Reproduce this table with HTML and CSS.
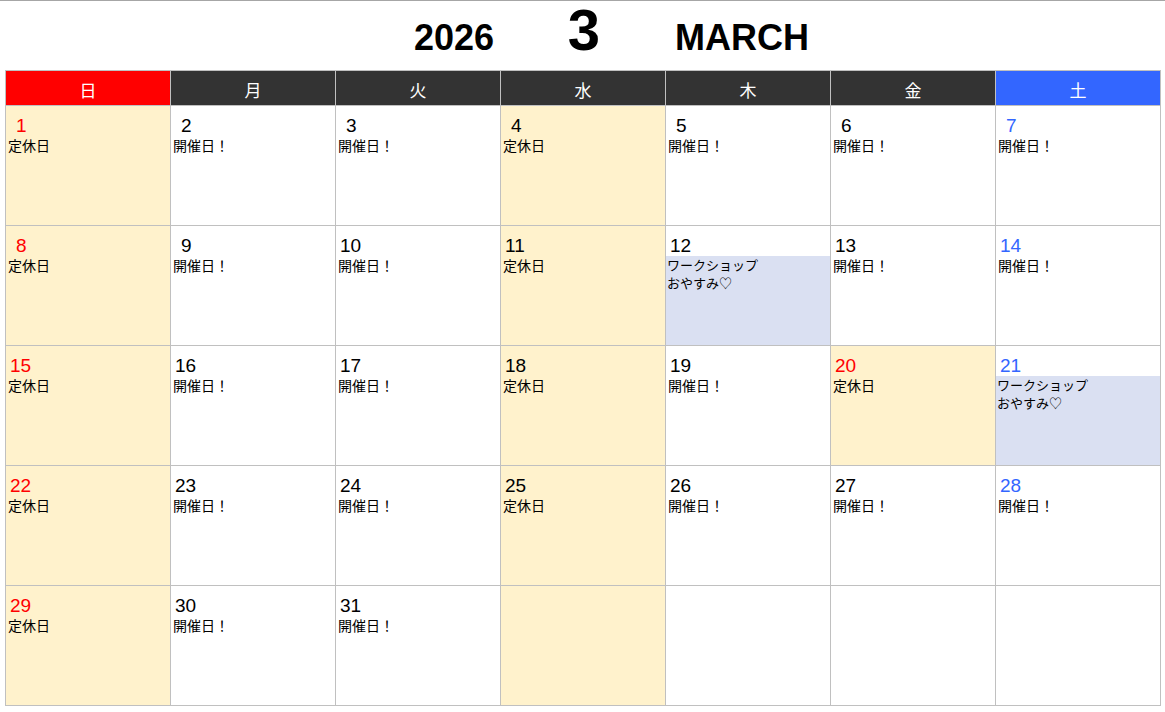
FILE: index.html
```html
<!DOCTYPE html>
<html lang="ja">
<head>
<meta charset="utf-8">
<title>2026 3 MARCH</title>
<link rel="stylesheet" href="styles.css">
</head>
<body>
<div class="page">
  <div class="title">
    <span class="t-year">2026</span>
    <span class="t-month">3</span>
    <span class="t-name">MARCH</span>
  </div>
  <div class="cal">
    <div class="dow sun">日</div>
    <div class="dow">月</div>
    <div class="dow">火</div>
    <div class="dow">水</div>
    <div class="dow">木</div>
    <div class="dow">金</div>
    <div class="dow sat">土</div>

    <div class="cell off"><div class="num red one">1</div><div class="label">定休日</div></div>
    <div class="cell"><div class="num one">2</div><div class="label">開催日！</div></div>
    <div class="cell"><div class="num one">3</div><div class="label">開催日！</div></div>
    <div class="cell off"><div class="num one">4</div><div class="label">定休日</div></div>
    <div class="cell"><div class="num one">5</div><div class="label">開催日！</div></div>
    <div class="cell"><div class="num one">6</div><div class="label">開催日！</div></div>
    <div class="cell"><div class="num blue one">7</div><div class="label">開催日！</div></div>

    <div class="cell off"><div class="num red one">8</div><div class="label">定休日</div></div>
    <div class="cell"><div class="num one">9</div><div class="label">開催日！</div></div>
    <div class="cell"><div class="num">10</div><div class="label">開催日！</div></div>
    <div class="cell off"><div class="num">11</div><div class="label">定休日</div></div>
    <div class="cell"><div class="num">12</div><div class="event">ワークショップ<br>おやすみ♡</div></div>
    <div class="cell"><div class="num">13</div><div class="label">開催日！</div></div>
    <div class="cell"><div class="num blue">14</div><div class="label">開催日！</div></div>

    <div class="cell off"><div class="num red">15</div><div class="label">定休日</div></div>
    <div class="cell"><div class="num">16</div><div class="label">開催日！</div></div>
    <div class="cell"><div class="num">17</div><div class="label">開催日！</div></div>
    <div class="cell off"><div class="num">18</div><div class="label">定休日</div></div>
    <div class="cell"><div class="num">19</div><div class="label">開催日！</div></div>
    <div class="cell off"><div class="num red">20</div><div class="label">定休日</div></div>
    <div class="cell"><div class="num blue">21</div><div class="event">ワークショップ<br>おやすみ♡</div></div>

    <div class="cell off"><div class="num red">22</div><div class="label">定休日</div></div>
    <div class="cell"><div class="num">23</div><div class="label">開催日！</div></div>
    <div class="cell"><div class="num">24</div><div class="label">開催日！</div></div>
    <div class="cell off"><div class="num">25</div><div class="label">定休日</div></div>
    <div class="cell"><div class="num">26</div><div class="label">開催日！</div></div>
    <div class="cell"><div class="num">27</div><div class="label">開催日！</div></div>
    <div class="cell"><div class="num blue">28</div><div class="label">開催日！</div></div>

    <div class="cell off"><div class="num red">29</div><div class="label">定休日</div></div>
    <div class="cell"><div class="num">30</div><div class="label">開催日！</div></div>
    <div class="cell"><div class="num">31</div><div class="label">開催日！</div></div>
    <div class="cell off"></div>
    <div class="cell"></div>
    <div class="cell"></div>
    <div class="cell"></div>
  </div>
</div>
</body>
</html>
```

FILE: styles.css
```css
html, body {
  margin: 0;
  padding: 0;
  background: #ffffff;
}

body {
  font-family: "Liberation Sans", "Noto Sans CJK JP", sans-serif;
  color: #000000;
}

.page {
  border-top: 1px solid #a6a6a6;
  width: 1165px;
}

.title {
  height: 69px;
  box-sizing: border-box;
  padding-left: 6px;
  display: grid;
  grid-template-columns: repeat(7, 164px);
  column-gap: 1px;
  align-items: baseline;
  font-weight: bold;
  line-height: 1;
}

.t-year {
  grid-column: 3;
  font-size: 36px;
  text-align: right;
  padding-right: 6px;
}

.t-month {
  grid-column: 4;
  font-size: 58px;
  text-align: center;
  padding-left: 2px;
}

.t-name {
  grid-column: 5;
  font-size: 36px;
  text-align: center;
  padding-right: 12px;
}

.cal {
  margin-left: 5px;
  width: 1156px;
  box-sizing: border-box;
  background: #c0c0c0;
  padding: 1px;
  display: grid;
  grid-template-columns: repeat(7, 164px);
  grid-template-rows: 34px repeat(5, 119px);
  gap: 1px;
}

.dow {
  background: #333333;
  color: #ffffff;
  font-family: "Noto Sans CJK JP", sans-serif;
  font-size: 17px;
  display: flex;
  align-items: center;
  justify-content: center;
  padding-top: 3px;
  box-sizing: border-box;
}

.dow.sun {
  background: #ff0000;
}

.dow.sat {
  background: #3366ff;
}

.cell {
  background: #ffffff;
  display: flex;
  flex-direction: column;
  min-width: 0;
}

.cell.off {
  background: #fff2cc;
}

.num {
  height: 30px;
  box-sizing: border-box;
  padding-top: 9px;
  padding-left: 4px;
  font-size: 19px;
  line-height: 21px;
  flex: none;
}

.num.one {
  padding-left: 10px;
}

.num.red {
  color: #ff0000;
}

.num.blue {
  color: #3366ff;
}

.label {
  font-family: "Noto Sans CJK JP", sans-serif;
  font-size: 14px;
  line-height: 18px;
  padding-left: 2px;
}

.event {
  flex: 1;
  background: #dae0f2;
  font-family: "Noto Sans CJK JP", sans-serif;
  font-size: 13px;
  line-height: 18px;
  padding-left: 1px;
}
```
